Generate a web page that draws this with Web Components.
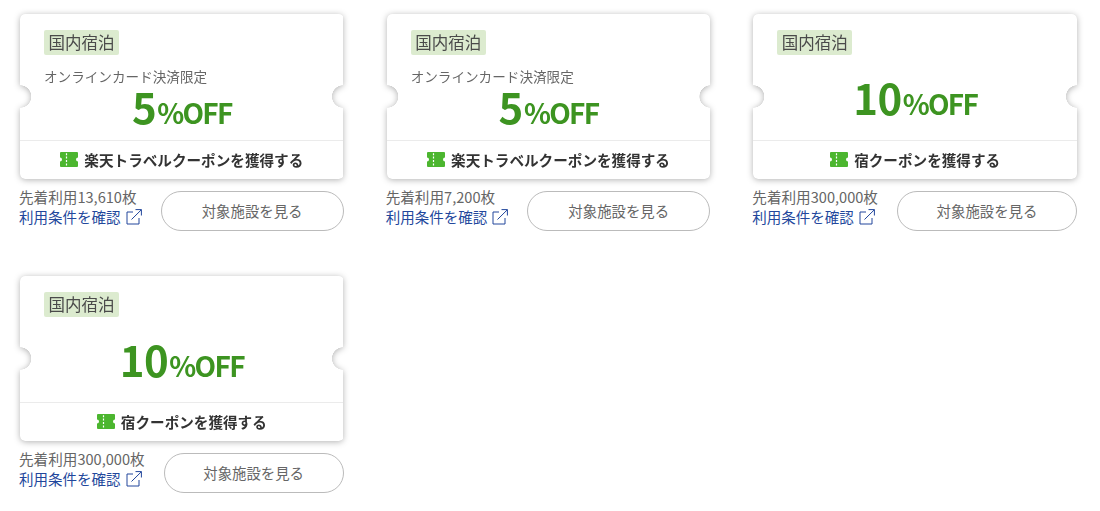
<!DOCTYPE html>
<html lang="ja">
<head>
<meta charset="utf-8">
<title>クーポン</title>
<style>
  html, body { margin: 0; background: #fff; }
  body { font-family: "Noto Sans CJK JP", "Noto Sans", sans-serif; }
</style>
</head>
<body>
<coupon-grid>
  <coupon-card used="先着利用13,610枚" note="オンラインカード決済限定" rate="5" action="楽天トラベルクーポンを獲得する"></coupon-card>
  <coupon-card used="先着利用7,200枚" note="オンラインカード決済限定" rate="5" action="楽天トラベルクーポンを獲得する"></coupon-card>
  <coupon-card used="先着利用300,000枚" rate="10" action="宿クーポンを獲得する"></coupon-card>
  <coupon-card used="先着利用300,000枚" rate="10" action="宿クーポンを獲得する"></coupon-card>
</coupon-grid>

<script>
/**
 * Grid that holds the coupons, three to a row.
 */
class CouponGrid extends HTMLElement {
  constructor () {
    super()
    this.attachShadow({ mode: 'open' }).innerHTML = `
      <style>
        :host {
          display: grid;
          grid-template-columns: repeat(3, 1fr);
          column-gap: 43px;
          row-gap: 45px;
          padding: 14px 23px 0 20px;
        }
      </style>
      <slot></slot>
    `
  }
}

const cardTemplate = document.createElement('template')
cardTemplate.innerHTML = `
  <style>
    :host {
      display: block;
      color: #333;
      font-family: "Noto Sans CJK JP", "Noto Sans", sans-serif;
    }
    .shadow {
      filter: drop-shadow(0 1px 3px rgba(0, 0, 0, .3));
    }
    .ticket {
      height: 165px;
      display: flex;
      flex-direction: column;
      background: #fff;
      border-radius: 5px;
      -webkit-mask:
        radial-gradient(circle 12px at 0 82.5px, transparent 11px, #000 11.5px) left / 51% 100% no-repeat,
        radial-gradient(circle 12px at 100% 82.5px, transparent 11px, #000 11.5px) right / 51% 100% no-repeat;
    }
    .body {
      flex: 1;
      min-height: 0;
      padding: 16px 24px 0;
      display: flex;
      flex-direction: column;
    }
    .tag {
      align-self: flex-start;
      height: 25px;
      line-height: 25px;
      padding: 0 4.5px;
      font-size: 16.5px;
      color: #4a4a4a;
      background: #dcebcf;
      border-radius: 2px;
    }
    .note {
      margin-top: 11px;
      height: 20px;
      line-height: 20px;
      font-size: 13.6px;
      color: #666;
    }
    .price {
      display: flex;
      justify-content: center;
      align-items: baseline;
      gap: 1px;
      color: #3d9421;
      font-weight: 700;
      font-size: 28px;
      line-height: 36px;
      letter-spacing: -1.7px;
      margin-top: 2px;
    }
    .price b {
      font-weight: 700;
      font-size: 42px;
      letter-spacing: -.5px;
    }
    :host(:not([note])) .note { display: none; }
    :host(:not([note])) .price { margin-top: 21px; line-height: 42px; }
    .action {
      height: 39px;
      box-sizing: border-box;
      padding-bottom: 2px;
      border-top: 1px solid #ebebeb;
      display: flex;
      justify-content: center;
      align-items: center;
      gap: 6px;
      font-size: 14.6px;
      font-weight: 700;
      color: #333;
    }
    .foot {
      display: flex;
      align-items: flex-start;
      gap: 19px;
      margin-top: 12px;
    }
    .meta {
      font-size: 14.6px;
      line-height: 20px;
      white-space: nowrap;
      margin: -4px 0 0 -1px;
    }
    .used { color: #666; }
    .link {
      display: flex;
      align-items: center;
      gap: 5px;
      color: #22479c;
      font-size: 14.5px;
    }
    .view {
      flex: 1;
      height: 40px;
      box-sizing: border-box;
      padding-bottom: 2px;
      display: flex;
      justify-content: center;
      align-items: center;
      border: 1px solid #bbb;
      border-radius: 20px;
      font-size: 14.4px;
      color: #666;
      background: #fff;
    }
  </style>
  <div class="shadow">
    <div class="ticket">
      <div class="body">
        <span class="tag">国内宿泊</span>
        <div class="note"></div>
        <div class="price"><b></b><span>%OFF</span></div>
      </div>
      <div class="action">
        <svg width="18" height="15" viewBox="0 0 18 15">
          <path fill="#4cb62f" d="M1 0h16a1 1 0 0 1 1 1v4.5a2 2 0 0 0 0 4V14a1 1 0 0 1-1 1H1a1 1 0 0 1-1-1V9.5a2 2 0 0 0 0-4V1a1 1 0 0 1 1-1z"/>
          <path stroke="#fff" stroke-width="1.2" stroke-dasharray="2 1.4" d="M6.5 1.2v13"/>
        </svg>
        <span class="action-text"></span>
      </div>
    </div>
  </div>
  <div class="foot">
    <div class="meta">
      <div class="used"></div>
      <div class="link">
        <span>利用条件を確認</span>
        <svg width="16" height="16" viewBox="0 0 16 16" fill="none" stroke="#22479c" stroke-width="1">
          <path d="M7 3H1v12h12V9"/>
          <path d="M5.5 10.5 15.3.8M9.5.6h5.9v5.9"/>
        </svg>
      </div>
    </div>
    <div class="view">対象施設を見る</div>
  </div>
`

/**
 * One coupon: ticket with its notches, then the usage line and the button.
 */
class CouponCard extends HTMLElement {
  constructor () {
    super()
    this.attachShadow({ mode: 'open' })
      .appendChild(cardTemplate.content.cloneNode(true))
  }

  connectedCallback () {
    const root = this.shadowRoot
    root.querySelector('.note').textContent = this.getAttribute('note') || ''
    root.querySelector('.price b').textContent = this.getAttribute('rate')
    root.querySelector('.action-text').textContent = this.getAttribute('action')
    root.querySelector('.used').textContent = this.getAttribute('used')
  }
}

customElements.define('coupon-grid', CouponGrid)
customElements.define('coupon-card', CouponCard)
</script>
</body>
</html>
